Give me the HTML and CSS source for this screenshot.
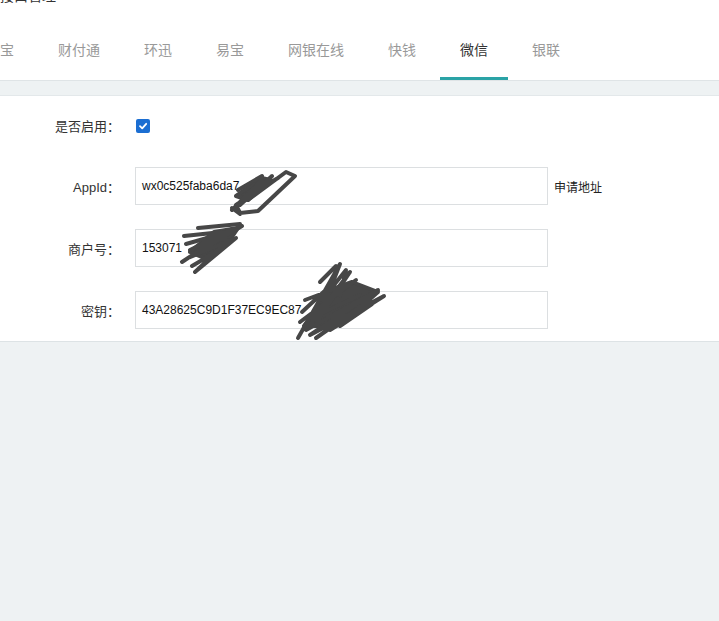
FILE: index.html
```html
<html>
<head>
<meta name="viewport" content="width=device-width, initial-scale=1.0">
<link rel="stylesheet" href="styles.css">
</head>
<body>
	<div class="header">
		<div class="page_title">接口管理</div>
		<ul class="tabs">
			<li>支付宝</li>
			<li>财付通</li>
			<li>环迅</li>
			<li>易宝</li>
			<li>网银在线</li>
			<li>快钱</li>
			<li class="active">微信</li>
			<li>银联</li>
		</ul>
	</div>

	<form class="cont_form" onsubmit="return false;">
		<div class="row row_check">
			<label class="row_label">是否启用：</label>
			<span class="check_box">
				<svg width="10" height="10" viewBox="0 0 10 10"><path d="M2 5.2 L4.2 7.3 L8.2 2.8" fill="none" stroke="#fff" stroke-width="1.8" stroke-linecap="round" stroke-linejoin="round"/></svg>
			</span>
		</div>
		<div class="row">
			<label class="row_label">AppId：</label>
			<div class="text_box">wx0c525faba6da7</div>
			<a class="apply_link">申请地址</a>
		</div>
		<div class="row">
			<label class="row_label">商户号：</label>
			<div class="text_box">153071</div>
		</div>
		<div class="row">
			<label class="row_label">密钥：</label>
			<div class="text_box">43A28625C9D1F37EC9EC87</div>
		</div>

		<!-- redaction scribbles over the secret values -->
		<svg class="scribble" viewBox="0 95 719 246" width="719" height="246">
			<g fill="#474747" stroke="#474747" stroke-width="4" stroke-linecap="round" stroke-linejoin="round">
				<path d="M236 196 L262 178 L270 180 L248 200 Z"/>
				<path d="M190 252 L214 232 L238 228 L230 240 L204 258 Z"/>
				<path d="M304 326 L330 290 L352 282 L378 292 L360 308 L330 326 Z"/>
			</g>
			<g fill="none" stroke="#474747" stroke-width="4" stroke-linecap="round" stroke-linejoin="round">
				<path d="M232 210 L262 180 L240 205 L272 176 L248 200 L286 172 L295 176 L258 211 L240 213 L236 205 L268 183 M244 198 L278 178 M238 190 L262 176 M240 214 L232 208"/>
				<path d="M182 262 L232 229 L190 250 L242 226 L188 258 L236 238 L195 272 L228 241 L214 236 L186 244 M198 228 L240 224 M184 236 L222 232 M192 266 L226 246"/>
				<path d="M298 338 L340 264 L318 320 L350 272 L306 330 L378 290 L310 335 L384 296 L330 330 L372 304 L340 326 M305 300 L345 285 L312 318 L360 295 M320 282 L336 266 M300 322 L356 280 M316 338 L370 300 M322 300 L346 270 L340 296 M302 312 L330 286"/>
			</g>
		</svg>
	</form>
</body>
</html>
```
FILE: styles.css
```css
body {
	margin: 0;
	background: #eef2f3;
	font-family: "Liberation Sans", "Noto Sans CJK SC", sans-serif;
	color: #333;
	overflow: hidden;
}

.header {
	background: #fff;
}

.page_title {
	font-size: 14px;
	line-height: 20px;
	margin-top: -14px;
	color: #333;
}

.tabs {
	list-style: none;
	margin: 17px 0 0 -48px;
	padding: 0;
	display: flex;
	gap: 4px;
	border-bottom: 1px solid #dfe4e6;
}

.tabs li {
	padding: 0 20px;
	font-size: 14px;
	line-height: 54px;
	color: #999;
	border-bottom: 3px solid transparent;
}

.tabs li.active {
	color: #333;
	border-bottom-color: #2aa3a6;
}

.cont_form {
	position: relative;
	margin: 14px 0 0 0;
	padding: 12px 0 12px 0;
	background: #fff;
	border-top: 1px solid #e3e8ea;
	border-bottom: 1px solid #dde3e5;
}

.row {
	display: flex;
	align-items: center;
	height: 38px;
	margin-bottom: 24px;
}

.row:last-of-type {
	margin-bottom: 0;
}

.row_check {
	height: 35px;
}

.row_label {
	width: 120px;
	text-align: right;
	font-size: 13px;
	color: #333;
	margin-right: 15px;
}

.check_box {
	width: 14px;
	height: 14px;
	margin-left: 1px;
	border-radius: 2px;
	background: #1b6ed2;
	display: flex;
	align-items: center;
	justify-content: center;
}

.text_box {
	box-sizing: border-box;
	width: 413px;
	height: 38px;
	line-height: 36px;
	padding-left: 6px;
	border: 1px solid #dcdfe1;
	font-size: 12px;
	color: #111;
}

.apply_link {
	margin-left: 6px;
	font-size: 12px;
	color: #222;
}

.scribble {
	position: absolute;
	left: 0;
	top: -1px;
}
```
